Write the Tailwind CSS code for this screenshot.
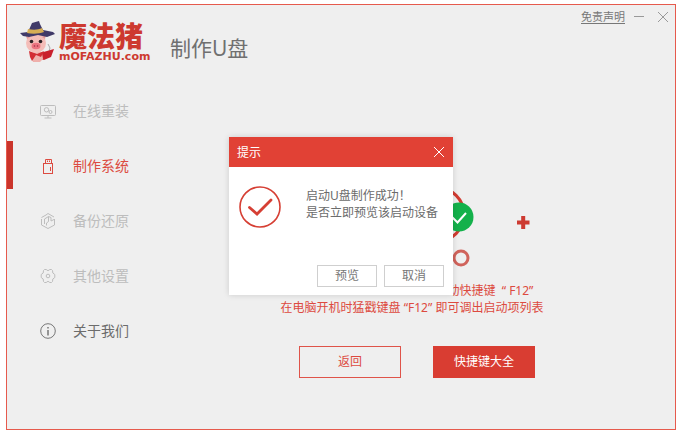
<!DOCTYPE html>
<html lang="zh-CN">
  <head>
    <meta charset="UTF-8" />
    <meta name="viewport" content="width=device-width, initial-scale=1.0" />
    <title>魔法猪 - 制作U盘</title>
    <script src="https://cdn.jsdelivr.net/npm/@tailwindcss/browser@4"></script>
  </head>

  <body class="min-h-screen flex bg-white pt-1 pr-1 pb-1.5 pl-1.5 font-['Noto_Sans','Noto_Sans_CJK_SC',sans-serif] text-xs">
    <div class="relative flex-1 flex flex-col border border-[#e65a4d] bg-[#efefef]">

      <!-- Header -->
      <header class="flex items-start h-[81px] pl-3 pr-1.5">
        <div class="flex items-start pt-[15px]">
          <svg class="w-9 h-[43px]" viewBox="0 0 36 43" aria-hidden="true">
            <path d="M29 24l2 4-3 10" fill="none" stroke="#aaa" stroke-width="1" />
            <path d="M21 33l14-4-3 8-7 3-6-2z" fill="#c9202c" />
            <path d="M11 34l5-4 7 3 1 6-3 3h-7z" fill="#efb0ac" />
            <path d="M10 31l8 3 7-3-3 6-5-2-4 6-2-4z" fill="#d32c33" />
            <circle cx="17" cy="23" r="10" fill="#f4bdb8" />
            <path d="M8 19l-1-3 4 1zM26 19l1-4-4 2z" fill="#e49a98" />
            <circle cx="12.500" cy="21.500" r="1.800" fill="#2b2024" />
            <circle cx="21.500" cy="21.500" r="1.800" fill="#2b2024" />
            <ellipse cx="17" cy="26" rx="4.500" ry="3.200" fill="#ec7480" />
            <circle cx="15.500" cy="26" r=".8" fill="#9c3444" />
            <circle cx="18.500" cy="26" r=".8" fill="#9c3444" />
            <path d="M1 13l8-1 4-9 7-2 1 3 3 6 10 2 2 2-8 3-9-2-9 2-6-1z" fill="#403a68" />
            <path d="M9 9c5 1 10 1 14-1l2 4c-5 2-12 2-17 1z" fill="#d6ae54" />
          </svg>
          <div class="w-24 pt-0.5 pl-1 text-[#cd392f] whitespace-nowrap">
            <p class="text-[28px] leading-7 font-black">魔法猪</p>
            <p class="font-['DejaVu_Sans'] text-[11px] leading-[14px] font-bold">mOFAZHU.com</p>
          </div>
        </div>
        <h1 class="pt-[29px] pl-[19px] text-[21px] leading-7 text-[#707070] whitespace-nowrap">制作U盘</h1>
        <div class="ml-auto pt-1 flex items-center">
          <a href="#disclaimer" class="text-[11px] leading-4 text-[#777] underline underline-offset-2">免责声明</a>
          <button type="button" class="ml-2 p-px text-[#999]" aria-label="最小化">
            <svg class="w-[10px] h-3" viewBox="0 0 10 12"><path d="M0 5.500h10" stroke="currentColor" /></svg>
          </button>
          <button type="button" class="ml-3 p-px text-[#999]" aria-label="关闭">
            <svg class="w-[10px] h-3" viewBox="0 0 10 12"><path d="M0 1l10 10M10 1L0 11" stroke="currentColor" /></svg>
          </button>
        </div>
      </header>

      <div class="flex-1 flex">
        <!-- Sidebar -->
        <nav class="w-[142px] flex flex-col gap-[7px] text-sm text-[#bdbdbd]">
          <a href="#online" class="h-12 flex items-center gap-4 pl-8 pt-0.5">
            <svg class="w-[18px] h-[18px]" viewBox="0 0 18 18" fill="none" stroke="#bdbdbd">
              <rect x="1.500" y="3.500" width="15" height="10" rx="1" />
              <path d="M9 13.500V16M5.500 16h7" />
              <circle cx="7.500" cy="7.800" r="2.200" />
              <circle cx="11.500" cy="10" r="1.500" />
            </svg>
            在线重装
          </a>
          <a href="#make" class="h-12 flex items-center gap-4 border-l-6 border-[#cb352b] pl-[26px] pt-0.5 text-[#dc4b41]" aria-current="page">
            <svg class="w-[18px] h-[18px]" viewBox="0 0 18 18" fill="none" stroke="#dc4b41">
              <path d="M6.500 6V2.500h6V6" />
              <rect x="4.500" y="6.500" width="9" height="10" />
              <path d="M8.500 3.500v1.500M10.500 3.500v1.500M11.500 10v4" />
            </svg>
            制作系统
          </a>
          <a href="#backup" class="h-12 flex items-center gap-4 pl-8 pt-0.5">
            <svg class="w-[18px] h-[18px]" viewBox="0 0 18 18" fill="none" stroke="#bdbdbd">
              <path d="M7 3l2-1.500 6 3.500M15.500 7v6L9 16.500 2.500 13V7" />
              <path d="M2.500 5.500L7 3M5.500 12V7l4-2.500v5L7.500 11v2.500M9.500 4.500l2.500 1V9l3-1.500" />
            </svg>
            备份还原
          </a>
          <a href="#settings" class="h-12 flex items-center gap-4 pl-8 pt-0.5">
            <svg class="w-[18px] h-[18px]" viewBox="0 0 18 18" fill="none" stroke="#bdbdbd" stroke-linejoin="round">
              <path d="M5.500 2.500h1.700Q9 5 10.800 2.500h1.700l1 1Q13 6.500 15.800 7.500v3Q13 11.500 13.500 14.500l-1 1h-1.700Q9 13 7.200 15.500H5.500l-1-1Q5 11.500 2.200 10.500v-3Q5 6.500 4.500 3.500z" />
              <circle cx="9" cy="9" r="1.800" />
            </svg>
            其他设置
          </a>
          <a href="#about" class="h-12 flex items-center gap-4 pl-8 pt-0.5 text-[#6c6c6c]">
            <svg class="w-[18px] h-[18px]" viewBox="0 0 18 18" fill="none" stroke="#777">
              <circle cx="9" cy="9" r="7.300" />
              <path d="M9 5v1.500M9 8v5.500" stroke-width="1.500" />
            </svg>
            关于我们
          </a>
        </nav>

        <!-- Result of making the USB disk -->
        <main class="flex-1 flex flex-col items-center pt-[100px] text-[#dd4a40]">
          <svg class="w-[266px] h-[84px]" viewBox="0 0 266 84" fill="none" aria-hidden="true">
            <circle cx="158" cy="28.500" r="27" stroke="#d23c32" stroke-width="3" />
            <circle cx="180" cy="31" r="14.500" fill="#14b14b" />
            <path d="M173 31l5.500 5.500 8.500-9.500" stroke="#fff" stroke-width="2" />
            <circle cx="182" cy="72" r="7" stroke="#d0635b" stroke-width="3" />
            <path d="M238 36.500h12.500M244.200 30v13" stroke="#cd3a31" stroke-width="4" />
          </svg>
          <div class="mt-3 leading-[17px] whitespace-nowrap">
            <p class="pr-2.5 text-right">动快捷键&nbsp; “ F12”</p>
            <p>在电脑开机时猛戳键盘 “F12” 即可调出启动项列表</p>
          </div>
          <div class="mt-[30px] pl-2.5 flex gap-8">
            <button type="button" class="w-[102px] h-8 border border-[#df5349]">返回</button>
            <button type="button" class="w-[102px] h-8 bg-[#d93d32] text-white">快捷键大全</button>
          </div>
        </main>
      </div>

      <!-- Dialog -->
      <div class="absolute inset-0 flex items-center justify-center pb-0.5">
        <section role="dialog" aria-labelledby="dialog-title" class="w-56 bg-white shadow-[0_0_6px_rgba(0,0,0,0.15)]">
          <div class="h-[30px] flex items-center justify-between bg-[#e14135] px-2 text-white">
            <h2 id="dialog-title" class="pt-0.5">提示</h2>
            <button type="button" class="p-px" aria-label="关闭">
              <svg class="w-[10px] h-[10px]" viewBox="0 0 10 10"><path d="M0 0l10 10M10 0L0 10" stroke="currentColor" /></svg>
            </button>
          </div>
          <div class="flex items-start gap-[25px] pt-[19px] pl-2.5 text-[#6b6b6b]">
            <svg class="w-[42px] h-[42px] shrink-0" viewBox="0 0 42 42" fill="none" stroke="#d63f34" aria-hidden="true">
              <circle cx="21" cy="21" r="20" stroke-width="1.600" />
              <path d="M10.500 21.500l7.500 6.500 14-14" stroke-width="2.800" stroke-linecap="round" />
            </svg>
            <p class="pt-px leading-[17px] whitespace-nowrap">启动U盘制作成功！<br />是否立即预览该启动设备</p>
          </div>
          <div class="flex justify-end gap-[7px] pt-[37px] pr-[9px] pb-2 text-[#777]">
            <button type="button" class="w-[60px] h-[22px] border border-[#cfcfcf]">预览</button>
            <button type="button" class="w-[60px] h-[22px] border border-[#cfcfcf]">取消</button>
          </div>
        </section>
      </div>
    </div>
  </body>
</html>
